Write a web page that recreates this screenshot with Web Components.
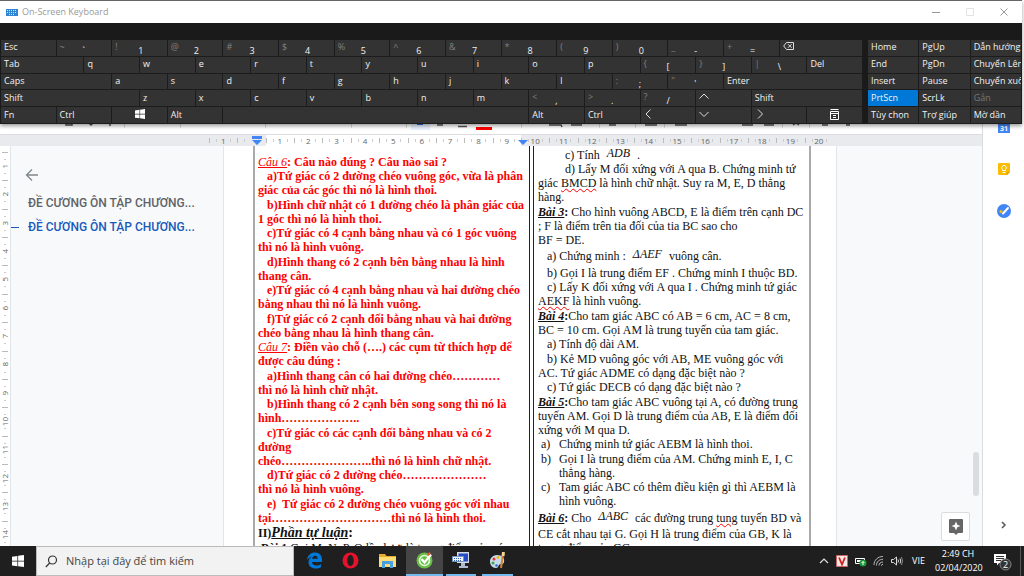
<!DOCTYPE html>
<html lang="vi">
<head>
<meta charset="utf-8">
<title>Đề cương ôn tập</title>
<style>
html,body{margin:0;height:100%;overflow:hidden;background:#fff}
body{font-family:"Open Sans","Noto Sans",sans-serif;font-size:10px}
</style>
</head>
<body>
<desk-top>
  <docs-app>
    <doc-outline slot="outline"></doc-outline>
    <doc-page slot="page">
      <doc-left slot="left"></doc-left>
      <doc-right slot="right"></doc-right>
    </doc-page>
    <side-panel slot="side"></side-panel>
  </docs-app>
  <task-bar slot="bar"></task-bar>
  <screen-keyboard slot="window"></screen-keyboard>
</desk-top>
<script>
function define(name, html, setup){
  customElements.define(name, class extends HTMLElement{
    constructor(){
      super();
      const t=document.createElement('template');
      t.innerHTML=typeof html==='function'?html(this):html;
      this.attachShadow({mode:'open'}).append(t.content.cloneNode(true));
      if(setup) setup(this,this.shadowRoot);
    }
  });
}

define('desk-top',`
<style>
:host{display:flex;flex-direction:column;height:100vh;position:relative}
main{flex:1;min-height:0;display:flex}
</style>
<main><slot></slot></main><slot name="bar"></slot><slot name="window"></slot>`);

/* ---------- On-screen keyboard ---------- */
const win='<svg width="10" height="10" viewBox="0 0 10 10" fill="#fff"><path d="M0 1.4 4.5.8v4H0zM5.1.7 10 0v4.8H5.1zM0 5.4h4.5v3.9L0 8.7zM5.1 5.4H10V10l-4.9-.7z"/></svg>';
const arrow=d=>`<svg width="10" height="10" viewBox="0 0 10 10" fill="none" stroke="#ddd"><path d="${d}"/></svg>`;
const K=(t,w=2)=>({t,w}), S=(s,t)=>({s,t,w:2}), I=(i,label,w=2)=>({i,label,w});
const letters=s=>[...s].map(c=>K(c));
const rows=[
 [K('Esc'),S('~','`'),S('!','1'),S('@','2'),S('#','3'),S('$','4'),S('%','5'),S('^','6'),S('&amp;','7'),S('*','8'),S('(','9'),S(')','0'),S('_','-'),S('+','='),
  I('<svg width="11" height="9" viewBox="0 0 11 9" fill="none" stroke="#ddd"><path d="M3.5.5h7v7h-7L.7 4zM5 2.2 8.6 5.8M8.6 2.2 5 5.8"/></svg>','Backspace',3)],
 [K('Tab',3),...letters('qwertyuiop'),S('{','['),S('}',']'),S('|','\\'),K('Del')],
 [K('Caps',4),...letters('asdfghjkl'),S(':',';'),S('"',"'"),K('Enter',5)],
 [K('Shift',5),...letters('zxcvbnm'),S('&lt;',','),S('&gt;','.'),S('?','/'),I(arrow('M.5 6.5 5 2l4.500 4.500'),'Up'),K('Shift',4)],
 [K('Fn'),K('Ctrl'),{...I(win,'Windows'),c:1},K('Alt'),I('','Space',11),K('Alt'),K('Ctrl'),I(arrow('M6.500 .5 2 5l4.500 4.500'),'Left'),I(arrow('M.5 3 5 7.500 9.500 3'),'Down'),I(arrow('M3 .5 7.500 5 3 9.500'),'Right'),
  {...I('<svg width="9" height="11" viewBox="0 0 9 11" fill="none" stroke="#fff"><path d="M.5 .5h8M.5 2.500h8v8h-8zM1 4.500h7M3 6.500h3M3 8.500h3"/></svg>','Menu'),c:1}]
];
const keyHtml=k=>`<button type="button" class="${k.s?'dual':''}${k.c?' mid':''}" style="grid-column:span ${k.w}" ${k.label?`aria-label="${k.label}"`:''}>${k.s?`<i>${k.s}</i><b>${k.t}</b>`:(k.t||k.i)}</button>`;
const nav=['Home','PgUp','Dẫn hướng','End','PgDn','Chuyển Lên','Insert','Pause','Chuyển xuống','PrtScn','ScrLk','Gắn','Tùy chọn','Trợ giúp','Mờ dần'];

define('screen-keyboard',`
<style>
:host{position:absolute;left:0;right:2px;top:0;display:block;background:#1a1a1a;box-shadow:0 2px 4px rgba(0,0,0,.4)}
header{display:flex;align-items:center;height:22px;background:#fff;border-top:1px solid #666;padding:0 12px 0 6px;gap:4px;color:#999}
h1{font:9px/20px "Open Sans",sans-serif;margin:0 auto 0 0;color:#999}
header button{border:0;background:none;padding:0;width:12px;height:12px;margin-left:18px}
header svg{display:block}
.keys{display:flex;gap:5px;margin-top:17px;height:84px;padding-left:1px}
.main{flex:862;display:grid;grid-template:repeat(5,1fr)/repeat(31,minmax(0,1fr))}
.nav{flex:154;display:grid;grid-template:repeat(5,1fr)/repeat(3,minmax(0,1fr))}
.keys button{position:relative;border:0;border-right:1px solid #1c1c1c;border-bottom:1px solid #1c1c1c;background:#333;color:#f2f2f2;font:9px/13px "Open Sans","Noto Sans",sans-serif;text-align:left;padding:0 0 2px 3px;white-space:nowrap;overflow:hidden;display:flex;align-items:center}
.keys .mid{justify-content:center;padding-left:0}
.keys .dual{display:grid;grid-template-columns:23px 1fr;padding-bottom:0}
i{font-style:normal;color:#808080;padding-bottom:4px}
b{font-weight:400;padding-top:3px}
.keys .on{background:#0078d7}
.keys .off{color:#777}
</style>
<header>
<svg width="12" height="7" viewBox="0 0 12 7"><path fill="#2f86d6" d="M0 0h12v7H0z"/><path stroke="#cfe6fa" stroke-dasharray="1 1" d="M1 1.500h10M1 3.500h10M3 5.500h6"/></svg>
<h1>On-Screen Keyboard</h1>
<button type="button" aria-label="Minimize"><svg width="12" height="12"><path d="M2 6.500h8" stroke="#999"/></svg></button>
<button type="button" aria-label="Maximize"><svg width="12" height="12"><path d="M2.500 2.500h7v7h-7z" stroke="#e2e2e2" fill="none"/></svg></button>
<button type="button" aria-label="Close"><svg width="12" height="12"><path d="m2.500 2.500 7 7m0-7-7 7" stroke="#999"/></svg></button>
</header>
<div class="keys">
<div class="main">${rows.flat().map(keyHtml).join('')}</div>
<div class="nav">${nav.map(t=>`<button type="button" class="${t==='PrtScn'?'on':t==='Gắn'?'off':''}">${t}</button>`).join('')}</div>
</div>`);

/* ---------- Document editor ---------- */
define('h-ruler',`
<style>
:host{display:block;height:11px;background:#e8eaed;font:8px/11px "Open Sans",sans-serif;color:#666;position:relative;overflow:hidden}
ol{margin:0 0 0 209px;padding:0;list-style:none;width:624px;display:grid;grid-template-columns:repeat(22,1fr)}
li{text-align:center;height:11px;background:linear-gradient(#bbb,#bbb) 0 3px/1px 5px no-repeat,linear-gradient(#ccc,#ccc) 7px 4px/1px 3px no-repeat,linear-gradient(#ccc,#ccc) 21px 4px/1px 3px no-repeat}
li.w{background-color:#fff}
svg{position:absolute;top:1px}
</style>
<ol>${['1','',...Array.from({length:20},(_,i)=>i+1)].map((n,i)=>`<li class="${i>1&&i<11?'w':''}">${n}</li>`).join('')}</ol>
<svg style="left:252px" width="10" height="10"><path fill="#4285f4" d="M0 0h10v3H0zM0 4h10L5 9z"/></svg>
<svg style="left:518px" width="10" height="10"><path fill="#4285f4" d="M0 4h10L5 9z"/></svg>`);

define('v-ruler',`
<style>
:host{flex:0 0 10px;border-right:1px solid #e3e5e8;background:#fff;display:block;overflow:hidden;font:8px/10px "Open Sans",sans-serif;color:#666}
ol{margin:0;padding:6px 0 0;height:calc(100% - 3px);list-style:none;display:grid;grid-template-rows:repeat(14,1fr)}
li{display:flex;align-items:center;justify-content:center;background:linear-gradient(#bbb,#bbb) 2px 0/6px 1px no-repeat,linear-gradient(#ccc,#ccc) 4px 7px/2px 1px no-repeat,linear-gradient(#ccc,#ccc) 4px 21px/2px 1px no-repeat}
span{writing-mode:vertical-rl;transform:rotate(180deg)}
</style>
<ol>${Array.from({length:14},(_,i)=>`<li><span>${i+1}</span></li>`).join('')}</ol>`);

define('docs-app',`
<style>
:host{flex:1;display:flex;min-width:0}
.doc{flex:1;min-width:0;display:flex;flex-direction:column;position:relative}
.tools{flex:0 0 134px;border-bottom:1px solid #dadce0;display:flex;align-items:flex-end;overflow:hidden}
.body{flex:1;min-height:0;display:flex;background:#f8f9fb;overflow:hidden}
.thumb{position:absolute;right:3px;bottom:50px;width:6px;height:44px;border-radius:3px;background:#dadce0}
.explore{position:absolute;right:12px;bottom:5px;width:29px;height:29px;padding:0;border:1px solid #dadce0;border-radius:2px;background:#fff;display:grid;place-items:center}
</style>
<section class="doc">
<div class="tools"><svg width="852" height="134" viewBox="0 0 852 134">
<g stroke="#dadce0"><path d="M124.500 110v18M180.500 110v18M265.500 110v18M351.500 110v18M406.500 110v18M521.500 110v18M599.500 110v18M635.500 110v18M664.500 110v18M782.500 110v18M809.500 110v18"/></g>
<g stroke="#555" stroke-width="1.500" fill="none"><path d="M66 118v7h6v-7M88 122l3 3 3-3M110 118v8M437 125h6M458 126.500h9M549 125h12l1 2M571 125h11M609 125h7M645 125h12M675 125h12M742 125h11M764 125h10M793 125l3-2 3 2M822 125h6M846 125h4"/></g>
<path fill="#e8f0fe" d="M411 110h19v20h-19z"/><path fill="#1a73e8" d="M417 118h6v7h-6z"/><path fill="red" d="M476 127h16v3h-16z"/></svg></div>
<h-ruler></h-ruler>
<div class="body"><v-ruler></v-ruler><slot name="outline"></slot><slot name="page"></slot></div>
<div class="thumb"></div>
<button class="explore" type="button" aria-label="Explore"><svg width="14" height="16" viewBox="0 0 14 16"><path fill="#666" d="M1 0h12q1 0 1 1v12q0 1-1 1H9l-2 2-2-2H1q-1 0-1-1V1q0-1 1-1z"/><path fill="#fff" d="m7 2.500 1.300 3.200L11.500 7 8.300 8.300 7 11.500 5.700 8.300 2.500 7l3.200-1.300z"/></svg></button>
</section>
<slot name="side"></slot>`);

define('doc-outline',`
<style>
:host{flex:0 0 212px;display:block;font:500 12px/24px Roboto,sans-serif}
nav{display:flex;flex-direction:column;padding-top:21px}
button{border:0;background:none;padding:0;margin-left:14px;width:14px;height:16px}
svg{display:block}
a{color:#5f6368;text-decoration:none;white-space:nowrap;padding-left:17px}
button+a{margin-top:8px}
a.on{color:#185abc;background:linear-gradient(#185abc,#185abc) 0 12px/8px 1px no-repeat}
</style>
<nav><button type="button" aria-label="Close outline"><svg width="14" height="16" viewBox="0 0 14 16" fill="none" stroke="#80868b" stroke-width="1.300"><path d="M13 8H2M7 2.500 1.500 8 7 13.500"/></svg></button>
<a href="#1">ĐỀ CƯƠNG ÔN TẬP CHƯƠNG...</a><a href="#2" class="on">ĐỀ CƯƠNG ÔN TẬP CHƯƠNG...</a></nav>`);

define('doc-page',`
<style>
:host{flex:0 0 614px;box-sizing:border-box;display:block;background:#fff;border-left:1px solid #e3e5e8;border-right:1px solid #e3e5e8;height:100%;overflow:hidden}
.sheet{display:grid;grid-template-columns:277px 281px;margin-left:29px;height:100%}
.l,.r{min-width:0;overflow:hidden;height:100%;box-sizing:border-box}
.l{border-left:2px solid #aaa;border-right:1px solid #222;padding-left:3px}
.r{border-left:1px solid #222;border-right:2px solid #aaa;margin-left:3px;padding-left:4px}
</style>
<div class="sheet"><div class="l"><slot name="left"></slot></div><div class="r"><slot name="right"></slot></div></div>`);

const prose=`
:host{display:block;font:12px/14px "Liberation Serif",serif;color:#111;white-space:nowrap}
p{margin:0}
p:nth-of-type(odd){padding-top:1px}
.in{text-indent:9px}
.sp{text-decoration:underline wavy red 1px}
b u{font-style:italic}`;

define('doc-left',`
<style>${prose}
:host{padding-top:8px}
.red{color:#f00;font-weight:700}
.red u{font-style:italic;font-weight:400}
.h{font:700 14px/16px "Liberation Serif",serif}
.h span{font-size:12px}
</style>
<div class="red">
<p><u>Câu 6</u>: Câu nào đúng ? Câu nào sai ?</p>
<p class="in">a)Tứ giác có 2 đường chéo vuông góc, vừa là phân<br>giác của các góc thì nó là hình thoi.</p>
<p class="in">b)Hình chữ nhật có 1 đường chéo là phân giác của<br>1 góc thì nó là hình thoi.</p>
<p class="in">c)Tứ giác có 4 cạnh bằng nhau và có 1 góc vuông<br>thì nó là hình vuông.</p>
<p class="in">d)Hình thang có 2 cạnh bên bằng nhau là hình<br>thang cân.</p>
<p class="in">e)Tứ giác có 4 cạnh bằng nhau và hai đường chéo<br>bằng nhau thì nó là hình vuông.</p>
<p class="in">f)Tứ giác có 2 cạnh đối bằng nhau và hai đường<br>chéo bằng nhau là hình thang cân.</p>
<p><u>Câu 7</u>: Điền vào chỗ (….) các cụm từ thích hợp để<br>được câu đúng :</p>
<p class="in">a)Hình thang cân có hai đường chéo…………<br>thì nó là hình chữ nhật.</p>
<p class="in">b)Hình thang có 2 cạnh bên song song thì nó là<br>hình………………..</p>
<p class="in">c)Tứ giác có các cạnh đối bằng nhau và có 2<br>đường<br>chéo…………………..thì nó là hình chữ nhật.</p>
<p class="in">d)Tứ giác có 2 đường chéo…………………<br>thì nó là hình vuông.</p>
<p class="in">e)&nbsp; Tứ giác có 2 đường chéo vuông góc với nhau<br>tại…………………………thì nó là hình thoi.</p>
</div>
<div class="h"><span>II)</span><b><u>Phần tự luận</u></b>:</div>
<div>&nbsp;<b>Bài 1</b>.Gọi M, N, P, Q lần lượt là trung điểm của các</div>`);

define('doc-right',`
<style>${prose}
:host{padding-top:1px}
.far{text-indent:27px}
.eq{line-height:18px}
i{font-size:12px;padding:0 4px;position:relative;top:-2px}
.li{display:grid;grid-template-columns:18px 1fr;padding-left:3px}
</style>
<p class="far">c) Tính <i>ADB</i> .</p>
<p class="far">d) Lấy M đối xứng với A qua B. Chứng minh tứ<br>giác <span class="sp">BMCD</span> là hình chữ nhật. Suy ra M, E, D thẳng<br>hàng.</p>
<p><b><u>Bài 3</u>:</b> Cho hình vuông ABCD, E là điểm trên cạnh DC<br>; F là điểm trên tia đối của tia BC sao cho<br>BF = DE.</p>
<p class="in eq">a) Chứng minh : <i>ΔAEF</i> vuông cân.</p>
<p class="in">b) Gọi I là trung điểm EF . Chứng minh I thuộc BD.</p>
<p class="in">c) Lấy K đối xứng với A qua I . Chứng minh tứ giác<br><span class="sp">AEKF</span> là hình vuông.</p>
<p><b><u>Bài 4</u>:</b>Cho tam giác ABC có AB = 6 cm, AC = 8 cm,<br>BC = 10 cm. Gọi AM là trung tuyến của tam giác.</p>
<p class="in">a) Tính độ dài AM.</p>
<p class="in">b) Kẻ MD vuông góc với AB, ME vuông góc với<br>AC. Tứ giác ADME có dạng đặc biệt nào ?</p>
<p class="in">c) Tứ giác DECB có dạng đặc biệt nào ?</p>
<p><b><u>Bài 5</u>:</b>Cho tam giác ABC vuông tại A, có đường trung<br>tuyến AM. Gọi D là trung điểm của AB, E là điểm đối<br>xứng với M qua D.</p>
<p class="li"><span>a)</span><span>Chứng minh tứ giác AEBM là hình thoi.</span></p>
<p class="li"><span>b)</span><span>Gọi I là trung điểm của AM. Chứng minh E, I, C<br>thẳng hàng.</span></p>
<p class="li"><span>c)</span><span>Tam giác ABC có thêm điều kiện gì thì AEBM là<br>hình vuông.</span></p>
<p class="eq"><b><u>Bài 6</u>:</b> Cho <i>ΔABC</i> các đường trung <span class="sp">tung</span> tuyến BD và</p>
<p>CE cắt nhau tại G. Gọi H là trung điểm của GB, K là<br>trung điểm của GC.</p>`);

define('side-panel',`
<style>
:host{flex:0 0 41px;border-left:1px solid #dadce0;background:#fff;display:flex;flex-direction:column;align-items:center;box-sizing:content-box;padding-top:119px}
button{border:0;background:none;padding:0;width:14px;height:14px;margin-bottom:29px}
button:nth-of-type(2){margin-bottom:28px}
button:last-of-type{margin-top:auto;margin-bottom:14px}
svg{display:block}
text{font:700 7px "Open Sans",sans-serif}
</style>
<button type="button" aria-label="Calendar"><svg width="14" height="14"><path fill="#4285f4" d="M1 2h12v12H1z"/><text x="3" y="12" fill="#fff">31</text></svg></button>
<button type="button" aria-label="Keep"><svg width="14" height="14"><path fill="#fbbc04" d="M2 1h10q1 0 1 1v8l-3 3H2q-1 0-1-1V2q0-1 1-1z"/><path fill="#f29900" d="M13 10h-3v3z"/><path d="M5.500 8.500v-1a2.300 2.300 0 1 1 3 0v1zM5.500 10.500h3" fill="none" stroke="#fff"/></svg></button>
<button type="button" aria-label="Tasks"><svg width="14" height="14"><circle cx="7" cy="7" r="7" fill="#4285f4"/><path d="m6 9.500 5-5.500" stroke="#fff" stroke-width="2" stroke-linecap="round"/><circle cx="4" cy="7.500" r="1.500" fill="#fbbc04"/></svg></button>
<button type="button" aria-label="Hide panel"><svg width="14" height="14"><path d="m5 4 3 3-3 3" fill="none" stroke="#555" stroke-width="1.500"/></svg></button>`);

/* ---------- Taskbar ---------- */
define('task-bar',`
<style>
:host{flex:0 0 30px;display:flex;align-items:stretch;background:#1f1f1f;color:#fff;position:relative}
button{border:0;background:none;padding:0;display:grid;place-items:center;color:#fff}
svg{display:block}
.start{width:36px}
label{width:258px;box-sizing:border-box;background:#f2f2f2;border:1px solid #bbb;display:flex;align-items:center;padding-left:8px;gap:8px}
input{flex:1;min-width:0;border:0;padding:0;background:none;font:11px/20px "Open Sans","Noto Sans",sans-serif;outline:0}
input::placeholder{color:#444;opacity:1}
.apps{display:grid;grid-template-columns:repeat(6,1fr);width:220px;margin:0 auto 0 2px}
.apps button{margin:0 3px;border-bottom:2px solid transparent;padding-top:1px}
.apps .run{border-color:#76b9ed}
.apps .on{margin:0;background:#454545}
.tray{display:flex;align-items:center;gap:6px;font:9px/14px "Open Sans",sans-serif;padding-right:3px}
.lang{margin:0 4px 0 3px;font-size:9px}
time{text-align:center;width:46px}
.note{margin-left:6px;width:28px;border-right:1px solid #555;align-self:stretch;place-items:center start}
text{font:9px "Open Sans",sans-serif}
</style>
<button class="start" type="button" aria-label="Start"><svg width="12" height="12" viewBox="0 0 10 10" fill="#fff"><path d="M0 1.400 4.500.8v4H0zM5.100.7 10 0v4.800H5.100zM0 5.400h4.500v3.900L0 8.700zM5.100 5.400H10V10l-4.900-.7z"/></svg></button>
<label><svg width="13" height="13" fill="none" stroke="#333" stroke-width="1.200"><circle cx="7.500" cy="5" r="4"/><path d="M4.700 8 .8 12"/></svg><input type="text" placeholder="Nhập tại đây để tìm kiếm" aria-label="Tìm kiếm"></label>
<div class="apps">
<button type="button" aria-label="Edge"><svg width="17" height="17" viewBox="0 0 17 17"><path fill="#0078d7" d="M1 8C1.500 3 5 .5 9 .5c4.500 0 7 3.300 7 7V10H6c.2 2.300 2 3.600 4.500 3.600 1.800 0 3.200-.5 4.500-1.300v3c-1.500.8-3.300 1.200-5.200 1.200-4.300 0-7.300-2.500-7.300-6.300 0-2.500 1.400-4.600 3.700-5.700C4 5 2.200 6 1 8zm5.200-1.200h5.500C11.700 5 10.700 3.800 9 3.800 7.400 3.800 6.500 5 6.200 6.800z"/></svg></button>
<button type="button" aria-label="Opera"><svg width="17" height="17" viewBox="0 0 17 17"><path fill="#e5122b" fill-rule="evenodd" d="M8.500.5a8 8 0 1 1 0 16 8 8 0 0 1 0-16zm0 2.500C6.500 3 5.300 5.500 5.300 8.500S6.500 14 8.500 14s3.200-2.500 3.200-5.500S10.500 3 8.500 3z"/></svg></button>
<button type="button" aria-label="Explorer"><svg width="17" height="15" viewBox="0 0 17 15"><path fill="#e8ab2c" d="M0 1h6l1.500 2H17v11H0z"/><path fill="#fbdc75" d="M0 4h17v10H0z"/><path fill="#4a9fe0" d="M3 8h11v7h-3v-4H6v4H3z"/></svg></button>
<button type="button" class="run on" aria-label="Browser"><svg width="17" height="17" viewBox="0 0 17 17"><circle cx="8.500" cy="8.500" r="8" fill="#69bf45"/><circle cx="8.500" cy="8.500" r="5" fill="none" stroke="#e9f9e0" stroke-width="1.600"/><path d="m5.500 7 3 3.500L15 2.500" fill="none" stroke="#fff" stroke-width="2.400"/><path fill="#f05030" d="M11 1.500 14 0l.5 2-2 2z"/></svg></button>
<button type="button" class="run" aria-label="Keyboard"><svg width="18" height="18" viewBox="0 0 18 18"><path fill="#d4d9e2" d="M5 0h12v11H5z"/><path fill="#264bc7" d="M6.500 1.500H16v8H6.500z"/><path fill="#aebbd0" d="M9 11h4v3h3v2H7v-2h2z"/><path fill="#f2f5fa" stroke="#7892bd" d="M.5 4.500h11v5H.5z"/><path stroke="#2b62b5" stroke-dasharray="1 1" d="M2 6.500h8M2 8.500h8"/></svg></button>
<button type="button" class="run" aria-label="Paint"><svg width="18" height="18" viewBox="0 0 18 18"><path fill="#c6dcec" d="M8 3c5 0 8 3 7 7-.7 3-3 2-4.300 2.500C9 13 10 16 7 16c-4 0-6-3-6-6.500C1 6 4 3 8 3z"/><circle cx="5" cy="7" r="1.500" fill="#e33"/><circle cx="9" cy="5.500" r="1.400" fill="#f7b500"/><circle cx="4" cy="11" r="1.500" fill="#3fa844"/><circle cx="7.500" cy="13.500" r="1.300" fill="#2b6cd0"/><path stroke="#d38433" stroke-width="2" d="M14 2 12 16"/><path stroke="#f6d394" stroke-width="3" d="M14.500 0 14 4"/></svg></button>
</div>
<div class="tray">
<svg width="12" height="12"><path d="m2 8 4-4 4 4" fill="none" stroke="#ddd" stroke-width="1.200"/></svg>
<svg width="12" height="12"><path fill="#f8e9e6" stroke="#c66" d="M.5.5h11v11H.5z"/><path d="m3 2.500 3 7 3-7" fill="none" stroke="#c22" stroke-width="1.800"/></svg>
<svg width="13" height="12"><path fill="none" stroke="#fff" d="M1.500 3.500h9v5h-9z"/><path fill="#fff" d="M3 5h4v2H3z"/><circle cx="9" cy="8" r="3.500" fill="#1a9a32"/><path d="M9 10V6.500M7.500 8 9 6.500 10.500 8" stroke="#fff" fill="none"/></svg>
<svg width="12" height="12" fill="none" stroke="#bbb"><path d="M1 10C1 5 5 1.500 10 1.500M3.500 10.500C3.500 7 6 4.300 10 4.300M6 10.500C6 8.500 7.500 7 10 7M8 10.500 10 9"/></svg>
<svg width="12" height="12" fill="none" stroke="#ddd"><path d="M.5 4.500h2L5.500 2v8l-3-2.500h-2zM7 4.500q1 1.500 0 3M9 3.500q1.500 2.500 0 5"/><path stroke="#888" d="M10.500 2q2 4 0 8"/></svg>
<span class="lang">VIE</span>
<time>2:49 CH<br>02/04/2020</time>
<button class="note" type="button" aria-label="Thông báo"><svg width="20" height="20" viewBox="0 0 20 20"><path fill="#fff" d="M1 3h12v9H6l-2 2.500V12H1z"/><path stroke="#333" d="M3 5.500h8M3 7.500h8M3 9.500h5"/><circle cx="12.500" cy="13.500" r="5.500" fill="#333" stroke="#888"/><text x="10" y="17" fill="#fff">2</text></svg></button>
</div>`);
</script>
</body>
</html>
